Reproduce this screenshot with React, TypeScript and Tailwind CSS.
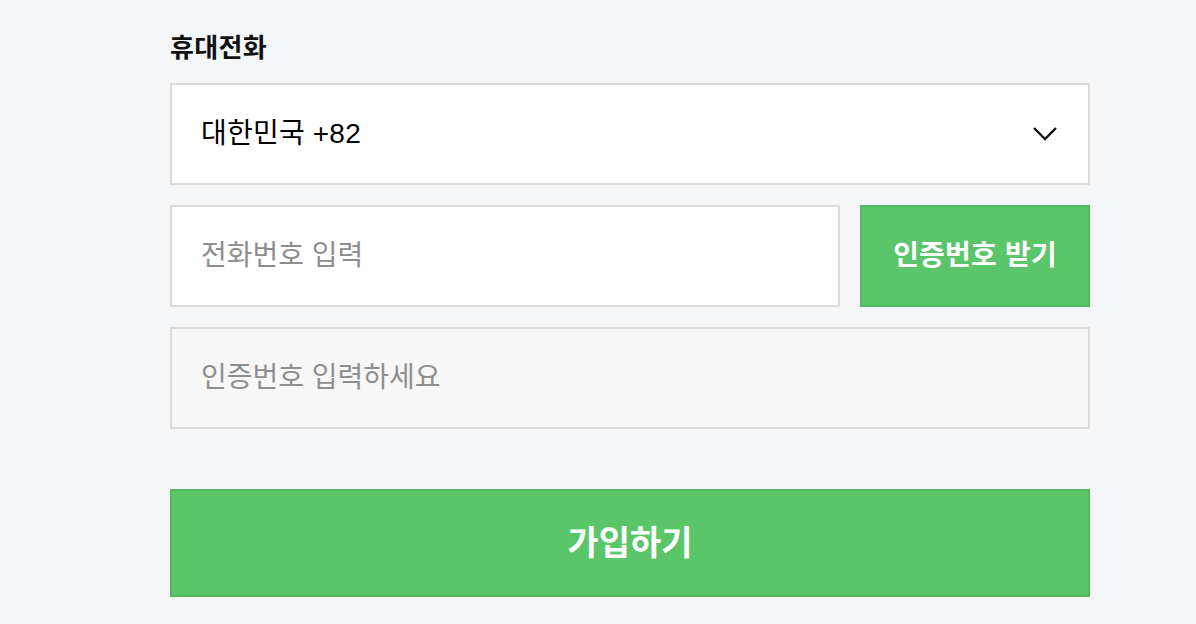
import { useState } from 'react';

const font = { fontFamily: '"Liberation Sans", "Noto Sans CJK KR", sans-serif' };

function Chevron() {
  return (
    <svg width="26" height="18" viewBox="0 0 26 18" fill="none" className="text-[#111]">
      <path d="M2 3 L13 14 L24 3" stroke="currentColor" strokeWidth="2.4" strokeLinecap="butt" />
    </svg>
  );
}

export default function App() {
  const [phone, setPhone] = useState('');
  const [code, setCode] = useState('');

  return (
    <div className="min-h-[624px] w-full bg-[#f5f6f7]" style={font}>
      <div className="ml-[170px] w-[920px] pt-[33px]">
        <label className="block text-[26px] font-bold leading-[30px] text-[#111] tracking-[0.3px]">
          휴대전화
        </label>
        <div className="mt-[20px] flex h-[102px] items-center justify-between border-2 border-[#dadada] bg-white pl-[29px] pr-[30px]">
          <span className="text-[28px] text-black tracking-[0.2px]">대한민국 +82</span>
          <Chevron />
        </div>
        <div className="mt-[20px] flex gap-[20px]">
          <input
            value={phone}
            onChange={(e) => setPhone(e.target.value)}
            placeholder="전화번호 입력"
            className="h-[102px] w-[670px] border-2 border-[#dadada] bg-white pl-[29px] text-[28px] text-black outline-none placeholder:text-[#8e8e8e]"
          />
          <button className="flex h-[102px] flex-1 items-center justify-center border-2 border-[#52b95f] bg-[#5bc569] text-[28px] font-bold text-white tracking-[0.2px]">
            인증번호 받기
          </button>
        </div>
        <input
          value={code}
          onChange={(e) => setCode(e.target.value)}
          placeholder="인증번호 입력하세요"
          className="mt-[20px] block h-[102px] w-full border-2 border-[#dadada] bg-[#f7f7f8] pl-[29px] text-[28px] text-black outline-none placeholder:text-[#8e8e8e]"
        />
        <button className="mt-[60px] flex h-[108px] w-full items-center justify-center border-2 border-[#52b95f] bg-[#5bc569] text-[34px] font-bold text-white">
          가입하기
        </button>
      </div>
    </div>
  );
}
